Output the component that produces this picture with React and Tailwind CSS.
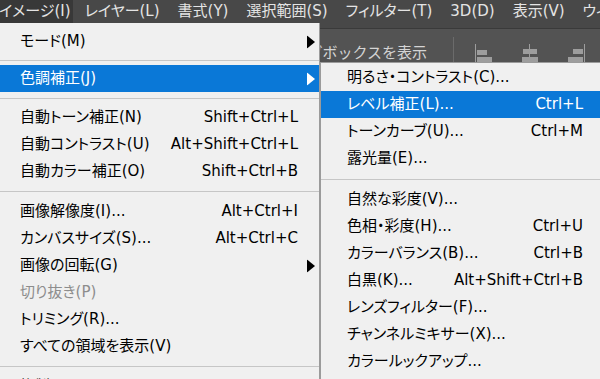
const menuBar = ['レイヤー(L)', '書式(Y)', '選択範囲(S)', 'フィルター(T)', '3D(D)', '表示(V)', 'ウィンドウ(W)'];

const mainItems = [
  { label: 'モード(M)', arrow: true },
  { sep: 'h-[10px]' },
  { label: '色調補正(J)', arrow: true, active: true },
  { sep: 'h-[12px]' },
  { label: '自動トーン補正(N)', sc: 'Shift+Ctrl+L' },
  { label: '自動コントラスト(U)', sc: 'Alt+Shift+Ctrl+L' },
  { label: '自動カラー補正(O)', sc: 'Shift+Ctrl+B' },
  { sep: 'h-[13px]' },
  { label: '画像解像度(I)...', sc: 'Alt+Ctrl+I' },
  { label: 'カンバスサイズ(S)...', sc: 'Alt+Ctrl+C' },
  { label: '画像の回転(G)', arrow: true },
  { label: '切り抜き(P)', disabled: true },
  { label: 'トリミング(R)...' },
  { label: 'すべての領域を表示(V)' },
  { sep: 'h-[13px]' },
  { label: '複製(D)...' },
];

const subItems = [
  { label: '明るさ・コントラスト(C)...' },
  { label: 'レベル補正(L)...', sc: 'Ctrl+L', active: true },
  { label: 'トーンカーブ(U)...', sc: 'Ctrl+M' },
  { label: '露光量(E)...' },
  { sep: 'h-[14px]' },
  { label: '自然な彩度(V)...' },
  { label: '色相・彩度(H)...', sc: 'Ctrl+U' },
  { label: 'カラーバランス(B)...', sc: 'Ctrl+B' },
  { label: '白黒(K)...', sc: 'Alt+Shift+Ctrl+B' },
  { label: 'レンズフィルター(F)...' },
  { label: 'チャンネルミキサー(X)...' },
  { label: 'カラールックアップ...' },
];

const Arrow = ({ white }) => (
  <svg width="8" height="13" viewBox="0 0 8 13" className="absolute left-[307px] top-1/2 -translate-y-1/2">
    <path d="M0 0 L8 6.5 L0 13 Z" fill={white ? '#ffffff' : '#000000'} />
  </svg>
);

const MenuRow = ({ item, pl }) => {
  if (item.sep) {
    return (
      <div className={`${item.sep} flex items-center`}>
        <div className="h-px w-full bg-[#c6c6c6]" />
      </div>
    );
  }
  return (
    <div
      className={`relative flex items-center h-[27px] ${pl} pr-[21px] whitespace-nowrap ${
        item.active ? 'bg-[#0a78d7] text-white' : item.disabled ? 'text-[#8d8d8d]' : 'text-black'
      }`}
    >
      <span className="flex-1">{item.label}</span>
      {item.sc && <span>{item.sc}</span>}
      {item.arrow && <Arrow white={item.active} />}
    </div>
  );
};

const AlignIcon = ({ mode }) => (
  <svg width="20" height="18" viewBox="0 0 20 18">
    {mode === 'left' && (
      <g fill="#9d9d9d">
        <rect x="0" y="0" width="1" height="18" />
        <rect x="2" y="6" width="10" height="5" />
        <rect x="2" y="13" width="15" height="5" />
      </g>
    )}
    {mode === 'center' && (
      <g fill="#9d9d9d">
        <rect x="9" y="0" width="1" height="18" />
        <rect x="3" y="5" width="14" height="5" />
        <rect x="2" y="13" width="16" height="5" />
      </g>
    )}
    {mode === 'right' && (
      <g fill="#9d9d9d">
        <rect x="19" y="0" width="1" height="18" />
        <rect x="8" y="5" width="10" height="5" />
        <rect x="3" y="13" width="15" height="5" />
      </g>
    )}
  </svg>
);

export default function App() {
  return (
    <div className="relative w-[600px] h-[379px] overflow-hidden bg-[#535353] font-['DejaVu_Sans','Noto_Sans_CJK_JP',sans-serif] text-[15px] [font-feature-settings:'palt']">
      {/* Menu bar */}
      <div className="flex h-[29px] bg-[#484848] border-b border-[#3a3a3a] text-[#e4e4e4] whitespace-nowrap">
        <div className="h-[23px] -ml-[2px] pl-[1px] pr-[2px] bg-[#383838] leading-[22px]">イメージ(I)</div>
        <div className="flex leading-[22px] pl-[3px]">
          {menuBar.map((m) => (
            <span key={m} className="px-[9px]">{m}</span>
          ))}
        </div>
      </div>

      {/* Options bar behind the menus */}
      <div className="flex items-start h-[60px] pt-[8px] text-[#d4d4d4] whitespace-nowrap">
        <div className="w-[453px] flex justify-end pr-[26px] pt-[5px]">
          <span className="[font-feature-settings:normal]">バウンディングボックスを表示</span>
        </div>
        <div className="w-px h-[40px] bg-[#6b6b6b]" />
        <div className="flex gap-[25px] pl-[21px] pt-[7px]">
          <AlignIcon mode="left" />
          <AlignIcon mode="center" />
          <AlignIcon mode="right" />
        </div>
      </div>

      {/* Main dropdown */}
      <div className="absolute left-0 top-[23px] w-[320px] h-[380px] bg-[#f0f0f0] border-r border-[#9b9b9b] pt-[5px]">
        {mainItems.map((item, i) => (
          <MenuRow key={i} item={item} pl="pl-[20px]" />
        ))}
      </div>

      {/* Submenu */}
      <div className="absolute left-[320px] top-[62px] w-[285px] h-[330px] bg-[#f0f0f0] border border-[#9b9b9b] pt-[1px]">
        {subItems.map((item, i) => (
          <MenuRow key={i} item={item} pl="pl-[26px]" />
        ))}
      </div>
    </div>
  );
}
